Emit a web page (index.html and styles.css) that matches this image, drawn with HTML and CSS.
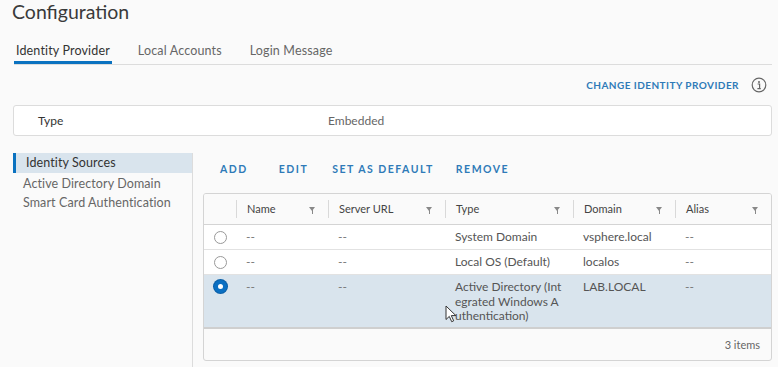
FILE: index.html
```html
<!DOCTYPE html>
<html>
<head>
<meta charset="utf-8">
<link rel="stylesheet" href="styles.css">
</head>
<body>
<div class="page">
  <h1 class="title">Configuration</h1>
  <div class="tabs">
    <div class="tab active">Identity Provider</div>
    <div class="tab">Local Accounts</div>
    <div class="tab">Login Message</div>
  </div>
  <div class="topbar">
    <span class="link-btn">CHANGE IDENTITY PROVIDER</span>
    <svg class="info" width="16" height="16" viewBox="0 0 16 16">
      <circle cx="8" cy="8" r="6.8" fill="none" stroke="#666" stroke-width="1.2"/>
      <circle cx="8" cy="4.9" r="1" fill="#666"/>
      <path d="M6.6 7h2v4.6M6.4 11.6h3.4" fill="none" stroke="#666" stroke-width="1.2"/>
    </svg>
  </div>
  <div class="type-box">
    <span class="type-label">Type</span>
    <span class="type-value">Embedded</span>
  </div>
  <div class="main">
    <div class="side">
      <div class="side-item selected">Identity Sources</div>
      <div class="side-item">Active Directory Domain</div>
      <div class="side-item">Smart Card Authentication</div>
    </div>
    <div class="content">
      <div class="toolbar">
        <span class="btn b-add">ADD</span>
        <span class="btn b-edit">EDIT</span>
        <span class="btn b-def">SET AS DEFAULT</span>
        <span class="btn">REMOVE</span>
      </div>
      <div class="grid">
        <div class="row head">
          <div class="cell c0"></div>
          <div class="cell c1"><span>Name</span><i class="filter"></i></div>
          <div class="cell c2"><span>Server URL</span><i class="filter"></i></div>
          <div class="cell c3"><span>Type</span><i class="filter"></i></div>
          <div class="cell c4"><span>Domain</span><i class="filter"></i></div>
          <div class="cell c5"><span>Alias</span><i class="filter"></i></div>
        </div>
        <div class="row">
          <div class="cell c0"><span class="radio"></span></div>
          <div class="cell c1 dim">--</div>
          <div class="cell c2 dim">--</div>
          <div class="cell c3">System Domain</div>
          <div class="cell c4">vsphere.local</div>
          <div class="cell c5 dim">--</div>
        </div>
        <div class="row">
          <div class="cell c0"><span class="radio"></span></div>
          <div class="cell c1 dim">--</div>
          <div class="cell c2 dim">--</div>
          <div class="cell c3">Local OS (Default)</div>
          <div class="cell c4">localos</div>
          <div class="cell c5 dim">--</div>
        </div>
        <div class="row sel">
          <div class="cell c0"><span class="radio on"></span></div>
          <div class="cell c1 dim">--</div>
          <div class="cell c2 dim">--</div>
          <div class="cell c3 wrap">Active Directory (Int<br>egrated Windows A<br>uthentication)</div>
          <div class="cell c4">LAB.LOCAL</div>
          <div class="cell c5 dim">--</div>
          <svg class="cursor" width="12" height="18" viewBox="0 0 12 18">
            <path d="M1 1v13.5l3.3-3.1 2.4 5.3 2-0.9-2.4-5.2h4.6z" fill="#fff" stroke="#333" stroke-width="1"/>
          </svg>
        </div>
        <div class="footer">3 items</div>
      </div>
    </div>
  </div>
</div>
</body>
</html>
```

FILE: styles.css
```css
* { box-sizing: border-box; }
html, body { margin: 0; padding: 0; }
body {
  background: #fafafa;
  font-family: Lato, "Open Sans", "Liberation Sans", sans-serif;
  color: #565656;
  width: 778px;
  height: 367px;
  overflow: hidden;
}
.page { padding: 0 6px 0 13px; }
.title {
  margin: 0;
  padding: 0;
  margin-left: -1px;
  font-size: 19.5px;
  line-height: 23px;
  font-weight: 400;
  color: #3a3a3a;
}
.tabs {
  display: flex;
  margin-top: 17px;
  margin-left: 1px;
  border-bottom: 1px solid #dcdcdc;
  height: 25px;
}
.tab {
  font-size: 12.5px;
  line-height: 22px;
  color: #666;
  margin-right: 24px;
  padding: 0 2px;
  letter-spacing: 0.15px;
}
.tab.active {
  color: #333;
  border-bottom: 3px solid #0a72c0;
}
.topbar {
  display: flex;
  justify-content: flex-end;
  align-items: center;
  height: 40px;
  padding-right: 5px;
}
.link-btn {
  font-size: 10px;
  font-weight: 700;
  letter-spacing: 0.45px;
  color: #2f7ab8;
  margin-right: 12px;
}
.info { display: block; }
.type-box {
  display: flex;
  align-items: center;
  height: 31px;
  background: #fff;
  border: 1px solid #dcdcdc;
  border-radius: 3px;
  font-size: 12px;
}
.type-label { width: 314px; padding-left: 24px; color: #333; }
.type-value { color: #666; }
.main {
  display: flex;
  margin-top: 17px;
  height: 214px;
}
.side {
  width: 180px;
  border-right: 1px solid #dcdcdc;
  font-size: 12.5px;
}
.side-item {
  height: 19.5px;
  line-height: 20.5px;
  padding-left: 10px;
  color: #666;
  letter-spacing: 0.1px;
}
.side-item.selected {
  background: #d9e4ed;
  border-left: 3px solid #0a72c0;
  padding-left: 10px;
  color: #333;
  margin-bottom: 1px;
}
.content { flex: 1; padding-left: 10px; }
.toolbar {
  display: flex;
  align-items: center;
  height: 40px;
  padding-left: 17px;
  padding-bottom: 8px;
}
.btn {
  font-size: 10.5px;
  font-weight: 700;
  letter-spacing: 1.5px;
  color: #2f7ab8;
}
.b-add { margin-right: 31px; }
.b-edit { margin-right: 24px; }
.b-def { margin-right: 22px; }
.grid {
  border: 1px solid #d4d4d4;
  border-radius: 3px;
  background: #fafafa;
  overflow: hidden;
}
.row {
  display: flex;
  position: relative;
  border-bottom: 1px solid #e2e2e2;
  background: #fff;
  font-size: 12px;
  color: #555;
}
.row.head {
  height: 31px;
  align-items: center;
  background: #fafafa;
  border-bottom: 1px solid #d4d4d4;
  font-size: 11px;
  color: #444;
}
.row.sel { background: #d9e4ed; border-bottom: 2px solid #cfcfcf; height: 54px; }
.cell { padding: 0 10px; line-height: 24px; }
.row.head .cell {
  display: flex;
  justify-content: space-between;
  align-items: center;
  height: 18px;
  line-height: 18px;
  border-left: 1px solid #d9d9d9;
}
.row.head .cell.c0 { border-left: none; }
.c0 { width: 32px; padding: 0 !important; display: flex; justify-content: center; }
.c1 { width: 92px; }
.c2 { width: 117px; }
.c3 { width: 128px; }
.c4 { width: 102px; }
.c5 { width: 96px; }
.row.head .c5 { flex: 1; }
.dim { color: #777; }
.row.sel .cell { line-height: 14.5px; padding-top: 5px; }
.row.sel .cell.c0 { padding-top: 5px !important; }
.filter {
  width: 0; height: 0;
  border-left: 3px solid transparent;
  border-right: 3px solid transparent;
  border-top: 4px solid #888;
  position: relative;
  margin-right: 3px;
}
.filter::after {
  content: "";
  position: absolute;
  left: -0.5px; top: -1px;
  width: 1px; height: 4px;
  background: #888;
}
.radio {
  display: block;
  width: 13px; height: 13px;
  border-radius: 50%;
  border: 1px solid #999;
  background: #fff;
  margin-top: 5.5px;
}
.row.sel .radio { margin-top: 0; }
.radio.on {
  border: 4.5px solid #0a6fc2;
  background: #fff;
  box-shadow: 0 0 0 1px #0a5fa8;
}
.cursor { position: absolute; left: 241px; top: 30px; }
.footer {
  height: 31px;
  line-height: 31px;
  text-align: right;
  padding-right: 11px;
  font-size: 11px;
  color: #666;
}
```
